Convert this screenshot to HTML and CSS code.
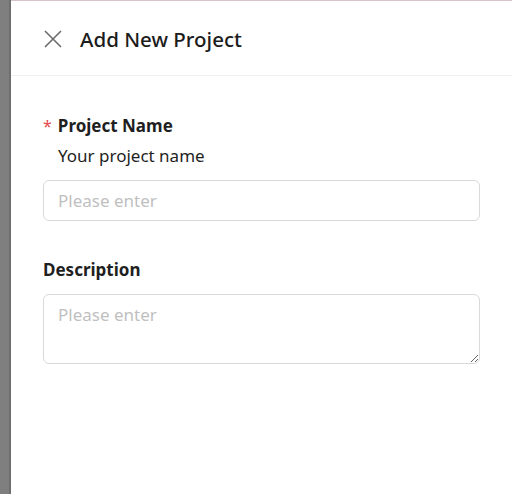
FILE: index.html
```html
<!DOCTYPE html>
<html>
<head>
<meta charset="utf-8">
<link rel="stylesheet" href="styles.css">
</head>
<body>
<div class="screen">
  <div class="backdrop"></div>
  <div class="drawer">
    <div class="header">
      <svg class="close" width="18" height="18" viewBox="0 0 18 18"><path d="M1 1L17 17M17 1L1 17" stroke="#6b6b6b" stroke-width="1.6" fill="none"/></svg>
      <div class="title">Add New Project</div>
    </div>
    <div class="body">
      <div class="field">
        <div class="label"><span class="req">*</span>Project Name</div>
        <div class="extra">Your project name</div>
        <input class="input" type="text" placeholder="Please enter">
      </div>
      <div class="field">
        <div class="label">Description</div>
        <textarea class="textarea" placeholder="Please enter"></textarea>
      </div>
    </div>
  </div>
</div>
</body>
</html>
```
FILE: styles.css
```css
html, body { margin: 0; padding: 0; }
body { font-family: "Noto Sans", "Open Sans", sans-serif; color: #1f1f1f; background: #fff; }
.screen { display: flex; width: 512px; height: 494px; overflow: hidden; }
.backdrop { width: 9px; background: #7f7f7f; border-right: 2px solid #6e6e6e; flex: none; }
.drawer { flex: 1; border-top: 1px solid #d8c3c9; display: flex; flex-direction: column; }
.header { height: 74px; border-bottom: 1px solid #f0f0f0; display: flex; align-items: center; padding: 0 32px 0 33px; gap: 18px; }
.close { flex: none; margin-top: 2px; }
.title { font-size: 20.5px; font-weight: 500; color: #1c1c1c; margin-top: 1px; }
.body { padding: 37px 32px 0 32px; display: flex; flex-direction: column; gap: 36px; }
.field { display: flex; flex-direction: column; }
.label { font-size: 17px; font-weight: 700; line-height: 26px; }
.req { color: #e5484d; font-weight: 400; margin-right: 6px; font-size: 16px; }
.extra { font-size: 17px; line-height: 26px; padding-left: 15px; margin-top: 4px; margin-bottom: 11px; color: #1f1f1f; }
.label + .input, .label + .textarea { margin-top: 11px; }
.input, .textarea { box-sizing: border-box; width: 437px; border: 1px solid #d9d9d9; border-radius: 6px; font-family: inherit; font-size: 17px; padding: 0 14px; outline: none; color: #1f1f1f; }
.input { height: 41px; }
.textarea { height: 70px; padding-top: 8px; resize: vertical; }
.input::placeholder, .textarea::placeholder { color: #bfbfbf; }
```
